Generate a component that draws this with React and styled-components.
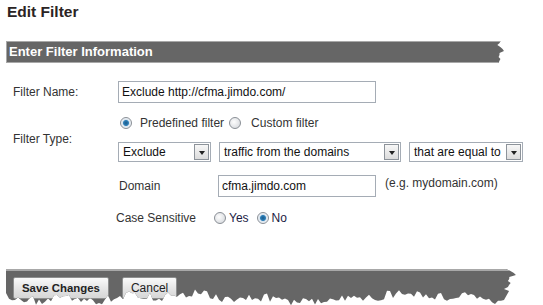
import React from 'react';
import styled, { createGlobalStyle } from 'styled-components';

const GlobalStyle = createGlobalStyle`
  body {
    margin: 0;
    background: #fff;
    font-family: "Liberation Sans", Arial, sans-serif;
  }
`;

// deterministic jitter for the torn paper edges
const jitter = (seed) => {
  const x = Math.sin(seed * 12.9898) * 43758.5453;
  return x - Math.floor(x);
};

const rightTear = (h, from, spread) => {
  const pts = ['0 0'];
  for (let y = 0; y <= h; y += 2) {
    pts.push(`${from + jitter(y + 3) * spread}px ${y}px`);
  }
  pts.push(`0 ${h}px`);
  return `polygon(${pts.join(',')})`;
};

const bottomTear = (h, right, spread) => {
  const pts = ['0 0', `${right}px 0`];
  for (let y = 0; y <= 22; y += 2) {
    pts.push(`${right + jitter(y + 7) * spread}px ${y}px`);
  }
  for (let x = right; x >= 0; x -= 3) {
    const base = Math.sin(x / 37) * 3 + Math.sin(x / 11) * 2;
    pts.push(`${x}px ${h - 13 + base + jitter(x) * 9}px`);
  }
  return `polygon(${pts.join(',')})`;
};

const Page = styled.div`
  width: 543px;
  height: 305px;
  overflow: hidden;
  padding: 0 0 0 6px;
  box-sizing: border-box;
  color: #333;
  font-size: 12px;
`;

const Title = styled.h1`
  margin: 0;
  padding: 3px 0 0 1px;
  font-size: 15.5px;
  font-weight: bold;
  color: #2b2424;
  line-height: 18px;
`;

const SectionBar = styled.div`
  margin-top: 20px;
  width: 499px;
  height: 22px;
  box-sizing: border-box;
  background: #666;
  border: 1px solid #a8a8a8;
  border-right: none;
  color: #fff;
  font-size: 13px;
  font-weight: bold;
  line-height: 20px;
  padding-left: 2px;
  clip-path: ${rightTear(22, 490, 8)};
`;

const Form = styled.div`
  display: grid;
  grid-template-columns: 105px 1fr;
  padding-left: 7px;
  margin-top: 18px;
  row-gap: 13px;
  align-items: center;
`;

const Label = styled.div`
  font-size: 12px;
  color: #333;
  margin-left: ${(p) => p.$shift || 0}px;
`;

const TextBox = styled.div`
  width: ${(p) => p.$w}px;
  height: 22px;
  box-sizing: border-box;
  border: 1px solid #a5acb5;
  background: #fff;
  padding-left: 3px;
  line-height: 20px;
  font-size: 12px;
  color: #111;
`;

const Stack = styled.div`
  display: flex;
  flex-direction: column;
  gap: 12px;
`;

const RadioRow = styled.div`
  display: flex;
  align-items: center;
  gap: ${(p) => p.$gap || 4}px;
  margin-left: ${(p) => p.$shift || 0}px;
  font-size: 12px;
  color: ${(p) => p.$color || '#333'};
`;

const RadioItem = styled.label`
  display: flex;
  align-items: center;
  gap: ${(p) => p.$gap || 5}px;
`;

const RadioDot = styled.span`
  width: 12px;
  height: 12px;
  border-radius: 50%;
  box-sizing: border-box;
  border: 1px solid #8a8f96;
  background: ${(p) =>
    p.$on
      ? 'radial-gradient(circle, #1a5a8a 0, #2d7fb8 2.5px, #d9e4ee 3.5px, #eef2f6 5px)'
      : 'radial-gradient(circle at 40% 40%, #fdfdfd 0, #e2e4e7 60%, #cfd2d6 100%)'};
`;

const SelectRow = styled.div`
  display: flex;
  gap: 8px;
`;

const Select = styled.div`
  width: ${(p) => p.$w}px;
  height: 20px;
  box-sizing: border-box;
  border: 1px solid #a5acb5;
  display: flex;
  align-items: center;
  justify-content: space-between;
  padding: 0 1px 0 4px;
  font-size: 12px;
  color: #111;
`;

const DropButton = styled.span`
  width: 15px;
  height: 16px;
  box-sizing: border-box;
  border: 1px solid #8d939a;
  background: linear-gradient(#f7f7f7, #dcdcdc);
  display: flex;
  align-items: center;
  justify-content: center;
  &::after {
    content: '';
    border-left: 3.5px solid transparent;
    border-right: 3.5px solid transparent;
    border-top: 4px solid #222;
    margin-top: 1px;
  }
`;

const SubGrid = styled.div`
  grid-column: 2;
  display: grid;
  grid-template-columns: 100px auto;
  row-gap: 14px;
  align-items: center;
`;

const DomainCell = styled.div`
  display: flex;
  align-items: flex-start;
  gap: 9px;
`;

const Hint = styled.span`
  font-size: 12px;
  color: #333;
  margin-top: 1px;
`;

const Footer = styled.div`
  margin-top: 44px;
  width: 512px;
  height: 37px;
  background: #666;
  border-top: 2px solid #a8a8a8;
  box-sizing: border-box;
  display: flex;
  gap: 13px;
  padding: 6px 0 0 7px;
  clip-path: ${bottomTear(37, 498, 12)};
`;

const Button = styled.button`
  height: 22px;
  padding: 0 8px;
  border: 1px solid #8e8f8f;
  border-radius: 2px;
  background: linear-gradient(#fafafa, #e6e6e6 50%, #d6d6d6);
  font-family: "Liberation Sans", Arial, sans-serif;
  font-size: ${(p) => (p.$bold ? 11.4 : 12)}px;
  font-weight: ${(p) => (p.$bold ? 'bold' : 'normal')};
  color: #222;
  line-height: 20px;
`;

export default function App() {
  return (
    <>
      <GlobalStyle />
      <Page>
        <Title>Edit Filter</Title>
        <SectionBar>Enter Filter Information</SectionBar>
        <Form>
          <Label>Filter Name:</Label>
          <TextBox $w={258}>Exclude http://cfma.jimdo.com/</TextBox>

          <Label>Filter Type:</Label>
          <Stack>
            <RadioRow $gap={5} $shift={2}>
              <RadioItem $gap={8}>
                <RadioDot $on />
                <span>Predefined filter</span>
              </RadioItem>
              <RadioItem $gap={10}>
                <RadioDot />
                <span>Custom filter</span>
              </RadioItem>
            </RadioRow>
            <SelectRow>
              <Select $w={93}>
                Exclude
                <DropButton />
              </Select>
              <Select $w={182}>
                traffic from the domains
                <DropButton />
              </Select>
              <Select $w={114}>
                that are equal to
                <DropButton />
              </Select>
            </SelectRow>
          </Stack>

          <SubGrid>
            <Label $shift={1}>Domain</Label>
            <DomainCell>
              <TextBox $w={158}>cfma.jimdo.com</TextBox>
              <Hint>(e.g. mydomain.com)</Hint>
            </DomainCell>
            <Label $shift={-2}>Case Sensitive</Label>
            <RadioRow $gap={8} $shift={-4} $color="#1c1c44">
              <RadioItem $gap={3}>
                <RadioDot />
                <span>Yes</span>
              </RadioItem>
              <RadioItem $gap={3}>
                <RadioDot $on />
                <span>No</span>
              </RadioItem>
            </RadioRow>
          </SubGrid>
        </Form>
        <Footer>
          <Button $bold>Save Changes</Button>
          <Button>Cancel</Button>
        </Footer>
      </Page>
    </>
  );
}
